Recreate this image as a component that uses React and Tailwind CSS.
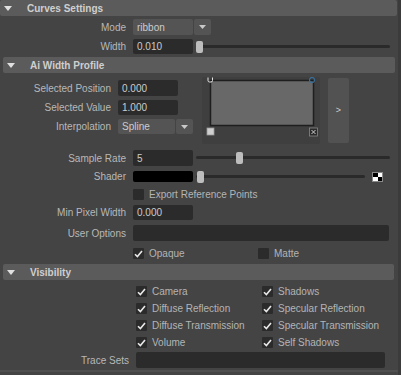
import React from "react";

const font = { fontFamily: '"Liberation Sans", Arial, sans-serif' };

function Header({ title, inset }) {
  return (
    <div className={`flex items-center h-[16px] bg-[#5b5b5b] rounded-[2px] ${inset}`}>
      <svg width="8" height="5" viewBox="0 0 8 5" className="ml-[4px]">
        <path d="M0 0 L8 0 L4 5 Z" fill="#e0e0e0" />
      </svg>
      <span className="ml-[15px] text-[10px] font-bold text-[#cfcfcf]">{title}</span>
    </div>
  );
}

function Label({ w, children }) {
  return (
    <div className={`${w} text-right text-[10px] text-[#b8b8b8] pr-[7px] shrink-0`}>{children}</div>
  );
}

function Field({ w, h = "h-[16px]", bg = "bg-[#2b2b2b]", children }) {
  return (
    <div className={`${w} ${h} ${bg} rounded-[2px] flex items-center pl-[4px] text-[10px] text-[#cccccc] shrink-0`}>
      {children}
    </div>
  );
}

function Arrow() {
  return (
    <div className="w-[17px] h-full bg-[#545454] rounded-[2px] ml-[1px] flex items-center justify-center">
      <svg width="7" height="4" viewBox="0 0 7 4">
        <path d="M0 0 L7 0 L3.5 4 Z" fill="#c8c8c8" />
      </svg>
    </div>
  );
}

function Slider({ w, pos }) {
  return (
    <div className={`relative ${w} h-[12px] ml-[3px]`}>
      <div className="absolute left-0 right-0 top-[4px] h-[3px] bg-[#2a2a2a] rounded-full" />
      <div
        className="absolute top-0 w-[7px] h-[12px] bg-[#bdbdbd] rounded-[2px]"
        style={{ left: pos }}
      />
    </div>
  );
}

function Check({ on }) {
  return (
    <div className="w-[11px] h-[11px] bg-[#2b2b2b] rounded-[1px] flex items-center justify-center shrink-0">
      {on && (
        <svg width="9" height="8" viewBox="0 0 9 8">
          <path d="M1 4.2 L3.4 6.6 L8 1" stroke="#e8e8e8" strokeWidth="1.6" fill="none" />
        </svg>
      )}
    </div>
  );
}

function CheckItem({ on, label, w = "" }) {
  return (
    <div className={`flex items-center ${w}`}>
      <Check on={on} />
      <span className="ml-[5px] text-[10px] text-[#b4b4b4]">{label}</span>
    </div>
  );
}

export default function App() {
  return (
    <div className="w-[401px] h-[375px] overflow-hidden bg-[#444444] flex" style={font}>
      <div className="w-[398px] flex flex-col">
        <Header title="Curves Settings" inset="mr-[1px]" />

        <div className="flex items-center h-[16px] mt-[3px]">
          <Label w="w-[133px]">Mode</Label>
          <div className="flex h-full">
            <Field w="w-[60px]" bg="bg-[#545454]">ribbon</Field>
            <Arrow />
          </div>
        </div>

        <div className="flex items-center h-[15px] mt-[4px]">
          <Label w="w-[133px]">Width</Label>
          <Field w="w-[60px]" h="h-[15px]">0.010</Field>
          <Slider w="w-[194px]" pos="0px" />
        </div>

        <div className="mt-[3px] pl-[3px]">
          <Header title="Ai Width Profile" inset="mr-[3px]" />
        </div>

        <div className="flex mt-[4px] h-[67px]">
          <div className="flex flex-col pt-[3px] gap-[4px]">
            <div className="flex items-center h-[16px]">
              <Label w="w-[118px]">Selected Position</Label>
              <Field w="w-[60px]">0.000</Field>
            </div>
            <div className="flex items-center h-[15px]">
              <Label w="w-[118px]">Selected Value</Label>
              <Field w="w-[60px]" h="h-[15px]">1.000</Field>
            </div>
            <div className="flex items-center h-[15px]">
              <Label w="w-[118px]">Interpolation</Label>
              <div className="flex h-full">
                <Field w="w-[57px]" h="h-[15px]" bg="bg-[#545454]">Spline</Field>
                <Arrow />
              </div>
            </div>
          </div>

          <div className="ml-[9px] w-[118px] h-[67px] bg-[#3f3f3f] rounded-[2px]">
            <svg width="118" height="67" viewBox="0 0 118 67">
              <rect x="8.5" y="3.5" width="103" height="45" fill="#686868" stroke="#1e1e1e" strokeWidth="1.5" />
              <path d="M6 0.5 V3.5 Q6 5 7.5 5 H9 Q10.5 5 10.5 3.5 V0.5" stroke="#e6e6e6" strokeWidth="1" fill="none" />
              <circle cx="110" cy="3" r="2.5" fill="none" stroke="#3a6f9a" strokeWidth="1.2" />
              <rect x="5" y="51" width="7" height="7" fill="#cfcfcf" stroke="#9a9a9a" strokeWidth="0.8" />
              <rect x="107.5" y="51" width="8" height="8" fill="#2a2a2a" stroke="#888" strokeWidth="0.8" />
              <path d="M109.5 53 L113.5 57 M113.5 53 L109.5 57" stroke="#cfcfcf" strokeWidth="1" />
            </svg>
          </div>

          <div className="ml-[8px] mt-[1px] w-[21px] h-[65px] bg-[#525252] rounded-[2px] flex items-center justify-center">
            <span className="text-[9px] text-[#cfcfcf]">&gt;</span>
          </div>
        </div>

        <div className="flex items-center h-[16px] mt-[6px]">
          <Label w="w-[133px]">Sample Rate</Label>
          <Field w="w-[60px]">5</Field>
          <Slider w="w-[194px]" pos="40px" />
        </div>

        <div className="flex items-center h-[11px] mt-[5px]">
          <Label w="w-[133px]">Shader</Label>
          <Field w="w-[60px]" h="h-[11px]" bg="bg-[#000000]" />
          <Slider w="w-[169px]" pos="1px" />
          <div className="ml-[7px] w-[11px] h-[10px] border border-[#8a8a8a] grid grid-cols-2 bg-white">
            <div className="bg-black" />
            <div className="bg-white" />
            <div className="bg-white" />
            <div className="bg-black" />
          </div>
        </div>

        <div className="flex items-center h-[12px] mt-[6px] pl-[133px]">
          <CheckItem on={false} label="Export Reference Points" />
        </div>

        <div className="flex items-center h-[15px] mt-[5px]">
          <Label w="w-[133px]">Min Pixel Width</Label>
          <Field w="w-[60px]" h="h-[15px]">0.000</Field>
        </div>

        <div className="flex items-center h-[16px] mt-[5px]">
          <Label w="w-[133px]">User Options</Label>
          <Field w="w-[256px]" />
        </div>

        <div className="flex items-center h-[11px] mt-[7px] pl-[133px]">
          <CheckItem on label="Opaque" w="w-[125px]" />
          <CheckItem on={false} label="Matte" />
        </div>

        <div className="mt-[5px] pl-[3px]">
          <Header title="Visibility" inset="mr-[4px]" />
        </div>

        <div className="flex flex-col mt-[3px] pl-[136px]">
          {[
            ["Camera", "Shadows"],
            ["Diffuse Reflection", "Specular Reflection"],
            ["Diffuse Transmission", "Specular Transmission"],
            ["Volume", "Self Shadows"],
          ].map(([a, b]) => (
            <div key={a} className="flex items-center h-[17px]">
              <CheckItem on label={a} w="w-[126px]" />
              <CheckItem on label={b} />
            </div>
          ))}
        </div>

        <div className="flex items-center h-[16px] mt-[1px]">
          <Label w="w-[136px]">Trace Sets</Label>
          <Field w="w-[249px]" />
        </div>

        <div className="mt-[2px] h-[2px] bg-[#4f4f4f]" />
      </div>
      <div className="w-[3px] bg-[#3b3b3b]" />
    </div>
  );
}
